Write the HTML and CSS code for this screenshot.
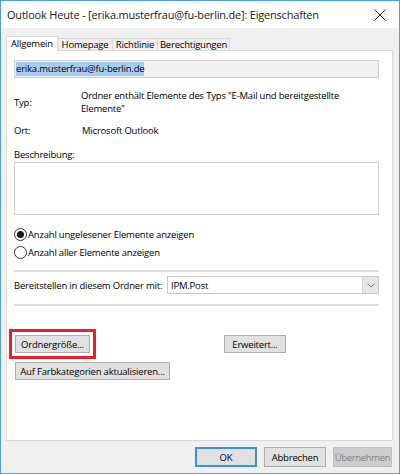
FILE: index.html
```html
<!DOCTYPE html>
<html lang="de">
<head>
<meta charset="utf-8">
<title>Eigenschaften</title>
<link rel="stylesheet" href="styles.css">
</head>
<body>
<div class="window">
  <div class="titlebar">
    <span class="title">Outlook Heute - [erika.musterfrau@fu-berlin.de]: Eigenschaften</span>
    <svg class="close" width="12" height="12" viewBox="0 0 12 12"><path d="M0.5 0.5 L11.5 11.5 M11.5 0.5 L0.5 11.5" stroke="#222" stroke-width="1" fill="none"/></svg>
  </div>
  <div class="body">
    <div class="tabs">
      <div class="tab active t1">Allgemein</div>
      <div class="tab t2">Homepage</div>
      <div class="tab t3">Richtlinie</div>
      <div class="tab t4">Berechtigungen</div>
    </div>
    <div class="panel">
      <div class="namefield"><span class="sel">erika.musterfrau@fu-berlin.de</span></div>
      <div class="row typ">
        <div class="lbl">Typ:</div>
        <div class="val">Ordner enthält Elemente des Typs "E-Mail und bereitgestellte Elemente"</div>
      </div>
      <div class="row ort">
        <div class="lbl">Ort:</div>
        <div class="val">Microsoft Outlook</div>
      </div>
      <div class="desc-label">Beschreibung:</div>
      <div class="textarea"></div>
      <div class="radio first"><span class="circle checked"></span>Anzahl ungelesener Elemente anzeigen</div>
      <div class="radio"><span class="circle"></span>Anzahl aller Elemente anzeigen</div>
      <div class="sep"></div>
      <div class="combo-row">
        <span class="combo-label">Bereitstellen in diesem Ordner mit:</span>
        <div class="combo">
          <span class="combo-text">IPM.Post</span>
          <span class="combo-btn"><svg width="8" height="5" viewBox="0 0 8 5"><path d="M0.5 0.5 L4 4 L7.5 0.5" stroke="#7a7a7a" stroke-width="1" fill="none"/></svg></span>
        </div>
      </div>
      <div class="sep sep2"></div>
      <div class="btn-row">
        <div class="btn highlight w-ordner">Ordnergröße...</div>
        <div class="btn w-erw">Erweitert...</div>
      </div>
      <div class="btn w-farb">Auf Farbkategorien aktualisieren...</div>
    </div>
    <div class="footer">
      <div class="btn big default">OK</div>
      <div class="btn big">Abbrechen</div>
      <div class="btn big disabled">Übernehmen</div>
    </div>
  </div>
</div>
</body>
</html>
```

FILE: styles.css
```css
* { box-sizing: border-box; }
html, body { margin: 0; padding: 0; }
body {
  font-family: "Open Sans", "Noto Sans", sans-serif;
  font-size: 9.5px;
  letter-spacing: -0.2px;
  color: #000;
  background: #fff;
}
.window {
  width: 400px;
  height: 474px;
  border: 1px solid #4a9ee6;
  display: flex;
  flex-direction: column;
  background: #f0f0f0;
}
.titlebar {
  height: 27px;
  background: #fff;
  display: flex;
  align-items: center;
  justify-content: space-between;
  padding: 0 13px 0 6px;
}
.title {
  font-size: 11px;
  color: #1a1a1a;
}
.close { display: block; }
.body {
  flex: 1;
  display: flex;
  flex-direction: column;
  padding: 0 6px 0 5px;
}
.tabs {
  display: flex;
  align-items: flex-end;
  margin-top: 8px;
  height: 14px;
  position: relative;
  z-index: 1;
}
.tab {
  height: 12px;
  line-height: 11px;
  border: 1px solid #d9d9d9;
  border-bottom: none;
  border-left: none;
  background: #f0f0f0;
  white-space: nowrap;
  text-align: center;
}
.tab.active {
  height: 15px;
  margin-bottom: -1px;
  background: #fff;
  border-left: 1px solid #d9d9d9;
  line-height: 13px;
}
.t1 { width: 52px; }
.t2 { width: 55px; }
.t3 { width: 45px; }
.t4 { width: 72px; }
.panel {
  height: 391px;
  background: #fff;
  border: 1px solid #d9d9d9;
  padding: 9px 14px 0 7px;
  display: flex;
  flex-direction: column;
  align-items: flex-start;
}
.namefield {
  width: 365px;
  height: 18px;
  background: #f0f0f0;
  border: 1px solid #cfcfcf;
  padding-left: 1px;
  display: flex;
  align-items: center;
}
.sel {
  background: #a9cdf1;
  line-height: 14px;
}
.row {
  display: flex;
  align-items: center;
  width: 365px;
}
.lbl { width: 67px; flex: none; }
.val { line-height: 13px; width: 290px; }
.typ { margin-top: 11px; height: 26px; }
.ort { margin-top: 9px; height: 13px; }
.ort .val { padding-left: 1px; }
.desc-label { margin-top: 11px; line-height: 13px; }
.textarea {
  margin-top: 1px;
  width: 365px;
  height: 53px;
  border: 1px solid #cfcfcf;
  background: #fff;
}
.radio {
  display: flex;
  align-items: center;
  height: 16px;
  margin-top: 2px;
  white-space: nowrap;
}
.radio.first { margin-top: 11px; }
.circle {
  width: 13px;
  height: 13px;
  border: 1px solid #333;
  border-radius: 50%;
  margin-right: 1px;
  display: flex;
  align-items: center;
  justify-content: center;
  background: #fff;
}
.circle.checked::after {
  content: "";
  width: 7px;
  height: 7px;
  border-radius: 50%;
  background: #1a1a1a;
}
.sep {
  width: 365px;
  height: 2px;
  background: #dcdcdc;
  margin-top: 10px;
}
.sep2 { margin-top: 10px; }
.combo-row {
  display: flex;
  align-items: center;
  width: 365px;
  margin-top: 4px;
  height: 18px;
}
.combo-label { width: 153px; flex: none; white-space: nowrap; }
.combo {
  flex: 1;
  height: 18px;
  border: 1px solid #c9c9c9;
  display: flex;
  align-items: center;
  justify-content: space-between;
  padding-left: 3px;
}
.combo-btn {
  width: 16px;
  height: 16px;
  background: #e6e6e6;
  border-left: 1px solid #d0d0d0;
  display: flex;
  align-items: center;
  justify-content: center;
}
.combo-btn svg { display: block; }
.btn {
  height: 18px;
  background: #e1e1e1;
  border: 1px solid #adadad;
  display: flex;
  align-items: center;
  justify-content: center;
  white-space: nowrap;
}
.btn-row {
  display: flex;
  margin-top: 29px;
  margin-left: 1px;
}
.w-ordner { width: 75px; }
.w-erw { width: 62px; margin-left: 134px; }
.w-farb { width: 155px; margin-top: 9px; margin-left: 1px; }
.highlight {
  outline: 3px solid #e8202b;
  outline-offset: 3px;
}
.footer {
  display: flex;
  justify-content: flex-end;
  gap: 7px;
  margin-top: 6px;
  padding-right: 1px;
}
.btn.big { width: 62px; height: 20px; }
.btn.big.disabled {
  width: 59px;
  background: #cccccc;
  border-color: #bfbfbf;
  color: #838383;
  letter-spacing: -0.35px;
  padding: 0;
}
.btn.default { border: 2px solid #3d8fe0; }
```
